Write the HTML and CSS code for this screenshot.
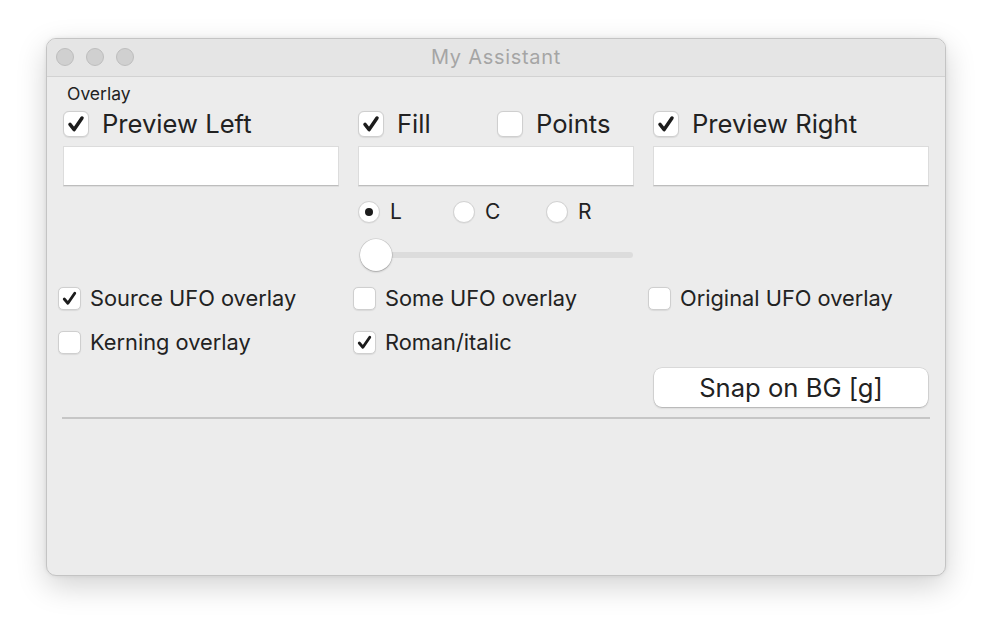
FILE: index.html
```html
<!DOCTYPE html>
<html>
<head>
<meta charset="utf-8">
<title>My Assistant</title>
<link rel="stylesheet" href="styles.css">
</head>
<body>
<div class="window">
  <div class="titlebar">
    <div class="lights"><span class="light"></span><span class="light"></span><span class="light"></span></div>
    <div class="title">My Assistant</div>
  </div>
  <div class="content">
    <div class="group-label">Overlay</div>

    <div class="grid row-big">
      <label class="check big"><span class="box on"><svg viewBox="0 0 26 26"><path d="M6.5 13.5 L11 19 L19.5 6.5"/></svg></span><span class="txt">Preview Left</span></label>
      <div class="pair">
        <label class="check big"><span class="box on"><svg viewBox="0 0 26 26"><path d="M6.5 13.5 L11 19 L19.5 6.5"/></svg></span><span class="txt">Fill</span></label>
        <label class="check big"><span class="box"></span><span class="txt">Points</span></label>
      </div>
      <label class="check big"><span class="box on"><svg viewBox="0 0 26 26"><path d="M6.5 13.5 L11 19 L19.5 6.5"/></svg></span><span class="txt">Preview Right</span></label>
    </div>

    <div class="grid row-fields">
      <div class="field"></div>
      <div class="field"></div>
      <div class="field"></div>
    </div>

    <div class="grid row-radios">
      <div></div>
      <div class="radios">
        <label class="radio"><span class="dot on"></span><span class="txt">L</span></label>
        <label class="radio"><span class="dot"></span><span class="txt">C</span></label>
        <label class="radio"><span class="dot"></span><span class="txt">R</span></label>
      </div>
      <div></div>
    </div>

    <div class="grid row-slider">
      <div></div>
      <div class="slider"><div class="track"></div><div class="knob"></div></div>
      <div></div>
    </div>

    <div class="grid small-grid row-small1">
      <label class="check small"><span class="box on"><svg viewBox="0 0 22 22"><path d="M5.5 11.5 L9.3 16 L16.5 5.5"/></svg></span><span class="txt">Source UFO overlay</span></label>
      <label class="check small"><span class="box"></span><span class="txt">Some UFO overlay</span></label>
      <label class="check small"><span class="box"></span><span class="txt">Original UFO overlay</span></label>
    </div>

    <div class="grid small-grid row-small2">
      <label class="check small"><span class="box"></span><span class="txt">Kerning overlay</span></label>
      <label class="check small"><span class="box on"><svg viewBox="0 0 22 22"><path d="M5.5 11.5 L9.3 16 L16.5 5.5"/></svg></span><span class="txt">Roman/italic</span></label>
      <div></div>
    </div>

    <div class="grid row-button">
      <div></div>
      <div></div>
      <button class="btn">Snap on BG [g]</button>
    </div>

    <div class="separator"></div>
  </div>
</div>
</body>
</html>
```

FILE: styles.css
```css
* { box-sizing: border-box; }

html, body {
  margin: 0;
  padding: 0;
  background: #ffffff;
  font-family: Inter, "Liberation Sans", Arial, sans-serif;
  color: #222222;
}

body {
  padding: 38px 0 0 46px;
  min-height: 630px;
}

.window {
  width: 900px;
  height: 538px;
  background: #ececec;
  border-radius: 10px;
  border: 1px solid #c4c4c4;
  box-shadow: 0 10px 30px rgba(0,0,0,0.18), 0 0 4px rgba(0,0,0,0.08);
  overflow: hidden;
  display: flex;
  flex-direction: column;
}

.titlebar {
  height: 38px;
  flex: 0 0 38px;
  background: #e5e5e5;
  border-bottom: 1px solid #d2d2d2;
  position: relative;
  display: flex;
  align-items: center;
  justify-content: center;
}

.lights {
  position: absolute;
  left: 9px;
  top: 9px;
  display: flex;
  gap: 12px;
}

.light {
  width: 18px;
  height: 18px;
  border-radius: 50%;
  background: #d0d0d0;
  border: 1px solid #bdbdbd;
}

.title {
  font-size: 20px;
  color: #a5a5a5;
  letter-spacing: 0.7px;
  margin-top: -1px;
}

.content {
  padding: 0 16px 0 16px;
  display: flex;
  flex-direction: column;
}

.group-label {
  font-size: 17.5px;
  line-height: 20px;
  height: 20px;
  margin-top: 7px;
  padding-left: 4px;
  color: #222;
}

.grid {
  display: grid;
  grid-template-columns: 276px 276px 276px;
  column-gap: 19px;
}

.row-big { margin-top: 4px; height: 28px; }
.row-fields { margin-top: 10px; height: 40px; }
.row-radios { margin-top: 13px; height: 24px; }
.row-slider { margin-top: 15px; height: 34px; }
.row-small1 { margin-top: 13px; height: 24px; }
.row-small2 { margin-top: 20px; height: 24px; }
.row-button { margin-top: 15px; height: 39px; }

.small-grid { margin-left: -5px; }

.check {
  display: flex;
  align-items: center;
  white-space: nowrap;
}

.box {
  background: #ffffff;
  border: 1px solid #cfcfcf;
  box-shadow: 0 0.5px 1px rgba(0,0,0,0.08);
  display: flex;
  align-items: center;
  justify-content: center;
  flex: none;
}

.box svg { width: 100%; height: 100%; display: block; }
.box path {
  fill: none;
  stroke: #1c1c1c;
  stroke-linecap: round;
  stroke-linejoin: round;
}

.big .box { width: 26px; height: 26px; border-radius: 6px; }
.big .box path { stroke-width: 3.8; }
.big .txt { font-size: 25.6px; margin-left: 13px; color: #222; }

.small .box { width: 23px; height: 23px; border-radius: 5px; }
.small .box path { stroke-width: 3; }
.small .txt { font-size: 21.8px; margin-left: 9px; color: #222; }

.pair {
  display: grid;
  grid-template-columns: 139px auto;
}

.field {
  background: #ffffff;
  border: 1px solid #dcdcdc;
  border-bottom-color: #bdbdbd;
  box-shadow: 0 1px 0 rgba(0,0,0,0.06);
}

.radios {
  display: grid;
  grid-template-columns: 95px 93px auto;
  align-items: center;
}

.radio {
  display: flex;
  align-items: center;
}

.dot {
  width: 22px;
  height: 22px;
  border-radius: 50%;
  background: #ffffff;
  border: 1px solid #d2d2d2;
  box-shadow: 0 0.5px 1px rgba(0,0,0,0.08);
  position: relative;
  flex: none;
}

.dot.on::after {
  content: "";
  position: absolute;
  left: 6px;
  top: 6px;
  width: 8px;
  height: 8px;
  border-radius: 50%;
  background: #1c1c1c;
}

.radio .txt { font-size: 21px; margin-left: 10px; color: #222; }

.slider {
  position: relative;
  height: 34px;
}

.track {
  position: absolute;
  left: 3px;
  right: 1px;
  top: 14px;
  height: 6px;
  border-radius: 3px;
  background: #dcdcdc;
}

.knob {
  position: absolute;
  left: 2px;
  top: 1px;
  width: 32px;
  height: 32px;
  border-radius: 50%;
  background: #ffffff;
  box-shadow: 0 0 0 0.5px rgba(0,0,0,0.15), 0 1px 2px rgba(0,0,0,0.25);
}

.btn {
  width: 274px;
  height: 39px;
  margin-left: 1px;
  border: none;
  border-radius: 8px;
  background: #ffffff;
  box-shadow: 0 0 0 0.5px rgba(0,0,0,0.14), 0 1px 2px rgba(0,0,0,0.2);
  font-family: Inter, "Liberation Sans", Arial, sans-serif;
  font-size: 25.6px;
  color: #222;
  padding: 0;
}

.separator {
  margin-top: 10px;
  margin-left: -1px;
  height: 2px;
  background: #c6c6c6;
  width: 868px;
}
```
